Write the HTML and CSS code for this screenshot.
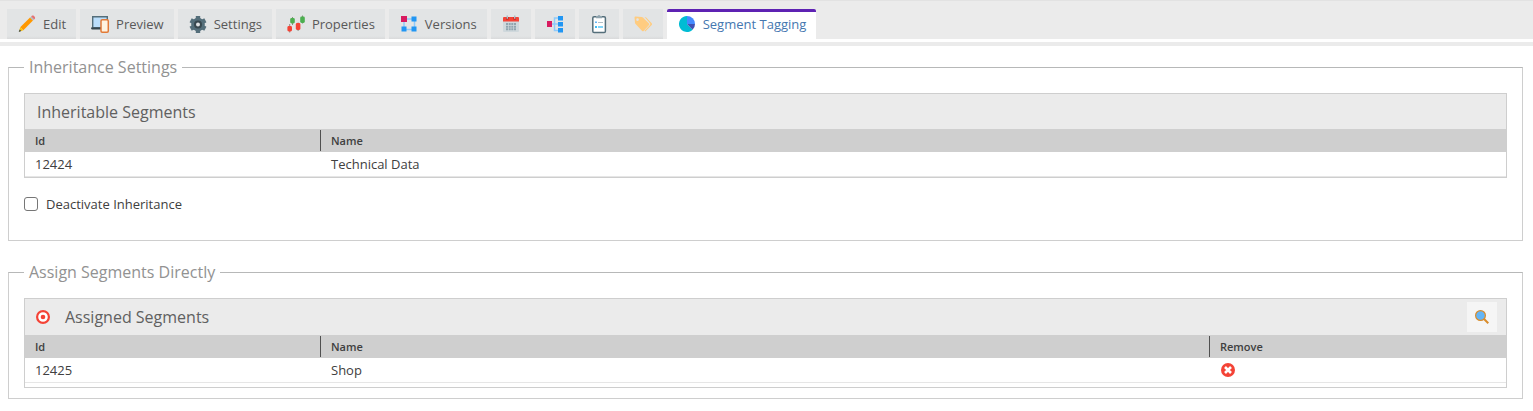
FILE: index.html
```html
<!DOCTYPE html>
<html lang="en">
<head>
    <meta charset="UTF-8">
    <meta name="viewport" content="width=device-width, initial-scale=1.0">
    <title>Segment Tagging</title>
    <link rel="stylesheet" href="styles.css">
</head>
<body>

    <nav class="tab-bar">
        <button type="button" class="tab">
            <svg class="icon" viewBox="0 0 20 20"><path fill="#ff9800" d="M3.2 13.2 13 3.6l3 3-9.700 9.600z"/><path fill="#b0bec5" d="m13 3.600 1.200-1.200 3 3L16 6.600z"/><path fill="#e57373" d="m14.200 2.400.6-.6c1.500-1.200 4.200 1.400 3 3l-.6.600z"/><path fill="#ffc107" d="m3.200 13.200 3.100 3L2 17.800z"/><path fill="#37474f" d="m2.600 15.600 1.700 1.500L1.700 18z"/></svg>
            Edit
        </button>
        <button type="button" class="tab">
            <svg class="icon" viewBox="0 0 20 20"><path fill="#bbdefb" stroke="#546e7a" stroke-width="1.400" d="M2.700 2.700h14.600v11H2.700z"/><path fill="#37474f" d="M1 13.600h11v1.900H2q-1 0-1-1.900z"/><rect x="11" y="5.700" width="7.300" height="12.600" rx="1.200" fill="#fff3e0" stroke="#e27a37" stroke-width="1.500"/></svg>
            Preview
        </button>
        <button type="button" class="tab">
            <svg class="icon" viewBox="0 0 20 20"><g fill="#546e7a"><circle cx="10" cy="10.500" r="6.800"/><path d="M7.800 2h4.400v17H7.800z"/><path d="M7.800 2h4.400v17H7.800z" transform="rotate(60 10 10.500)"/><path d="M7.800 2h4.400v17H7.800z" transform="rotate(120 10 10.500)"/></g><circle cx="10" cy="10.500" r="4" fill="#37474f"/><circle cx="10" cy="10.500" r="2" fill="#dfe2e4"/></svg>
            Settings
        </button>
        <button type="button" class="tab">
            <svg class="icon" viewBox="0 0 20 20"><g fill="#8d8b80"><path d="M3.200 10h1v8.600h-1zM6 3h1v8H6zM11.600 8.500h1V17h-1zM16 1.500h1v8h-1z"/></g><rect x="1.400" y="12" width="4.600" height="5.500" rx="1.400" fill="#f44336"/><rect x="4.200" y="4" width="4.600" height="5.500" rx="1.400" fill="#4caf50"/><rect x="9.800" y="9" width="4.600" height="7" rx="1.400" fill="#f44336"/><rect x="14.200" y="2.500" width="4.600" height="6.500" rx="1.400" fill="#4caf50"/></svg>
            Properties
        </button>
        <button type="button" class="tab">
            <svg class="icon" viewBox="0 0 20 20"><path fill="none" stroke="#90caf9" stroke-width="1.500" d="M5 5h10.500v10.500H5z"/><path fill="#d81b60" d="M2 2h6v6H2z"/><path fill="#2196f3" d="M12.500 2.500h5v5h-5zM2.500 12.500h5v5h-5zM12.500 12.500h5v5h-5z"/></svg>
            Versions
        </button>
        <button type="button" class="tab" aria-label="Schedule">
            <svg class="icon" viewBox="0 0 20 20"><path fill="#cfd8dc" d="M2 7h16v10q0 1-1 1H3q-1 0-1-1z"/><path fill="#f44336" d="M3 3h14q1 0 1 1v3.500H2V4q0-1 1-1z"/><path fill="#b71c1c" d="M5 3h2.500v2.500H5zM12.500 3H15v2.500h-2.500z"/><path fill="#b0bec5" d="M5.500 1.500h1.500v3.200H5.500zM13 1.500h1.500v3.200H13z"/><path fill="#90a4ae" d="M5 9h2v2H5zm2.700 0h2v2h-2zm2.600 0h2v2h-2zM13 9h2v2h-2zm-8 2.700h2v2H5zm2.700 0h2v2h-2zm2.600 0h2v2h-2zm2.700 0h2v2h-2zm-8 2.600h2v2H5zm2.700 0h2v2h-2zm2.600 0h2v2h-2zm2.700 0h2v2h-2z"/></svg>
        </button>
        <button type="button" class="tab" aria-label="Dependencies">
            <svg class="icon" viewBox="0 0 20 20"><path fill="none" stroke="#90caf9" stroke-width="1.500" d="M6 10h9M15 4H9.500v12.500H15"/><path fill="#d81b60" d="M2 7h5v6H2z"/><path fill="#2196f3" d="M13 2h5v4.500h-5zM13 8h5v4.500h-5zM13 14h5v4.500h-5z"/></svg>
        </button>
        <button type="button" class="tab" aria-label="Notes">
            <svg class="icon" viewBox="0 0 20 20"><rect x="3.800" y="2.800" width="12.600" height="15.800" rx="1.300" fill="#fff" stroke="#546e7a" stroke-width="1.500"/><path fill="#90a4ae" d="M7 4.200V2h1.500q1.500-2 3 0H13v2.200z"/><path fill="#b0bec5" d="M9 8h5v1H9z"/><path fill="#64b5f6" d="M6 7.500h2V9H6z"/><path fill="#03a9f4" d="M6 12.200h2v1.500H6zM9 12.400h5v1.200H9z"/></svg>
        </button>
        <button type="button" class="tab" aria-label="Tags">
            <svg class="icon" viewBox="0 0 20 20"><path fill="#ffcc80" d="m11.500 3 1.700.5 5.500 5.800q.8.900 0 1.700l-6.400 6.500-.8-.8 5.500-5.800q.7-.8 0-1.600z"/><path fill="#ffcc80" fill-rule="evenodd" d="M1.500 3.500q0-1 1-1l6.300.4q.7 0 1.200.6l6 6q.8.800 0 1.600l-5.300 5.800q-.8.800-1.600 0L2.600 10q-.5-.5-.6-1.200zm3 .8a1.300 1.300 0 1 0 .1 2.600 1.300 1.300 0 0 0-.1-2.600z"/></svg>
        </button>
        <button type="button" class="tab active">
            <svg class="icon" viewBox="0 0 20 20"><path fill="#00bcd4" d="M10 2a8 8 0 1 0 5.600 13.700L10 10z"/><path fill="#448aff" d="M10 2v8h8a8 8 0 0 0-8-8z"/><path fill="#3f51b5" d="M18 10h-8l5.600 5.700A8 8 0 0 0 18 10z"/></svg>
            Segment Tagging
        </button>
    </nav>

    <main class="content">
        <fieldset class="section inheritance">
            <legend>Inheritance Settings</legend>
            <div class="panel">
                <div class="panel-header">
                    <h2>Inheritable Segments</h2>
                </div>
                <table>
                    <thead>
                        <tr>
                            <th class="col-id"><span>Id</span></th>
                            <th><span>Name</span></th>
                        </tr>
                    </thead>
                    <tbody>
                        <tr>
                            <td>12424</td>
                            <td>Technical Data</td>
                        </tr>
                    </tbody>
                </table>
            </div>
            <div class="check-row">
                <input type="checkbox" id="deactivate">
                <label for="deactivate">Deactivate Inheritance</label>
            </div>
        </fieldset>

        <fieldset class="section">
            <legend>Assign Segments Directly</legend>
            <div class="panel assigned">
                <div class="panel-header">
                    <svg class="target" viewBox="0 0 16 16"><circle cx="8" cy="8" r="5.900" fill="#fff" stroke="#f44336" stroke-width="2.200"/><circle cx="8" cy="8" r="2.300" fill="#f44336"/></svg>
                    <h2>Assigned Segments</h2>
                    <button type="button" class="search-btn" aria-label="Search">
                        <svg viewBox="0 0 16 16"><path stroke="#d98c2b" stroke-width="2" d="m9.800 9.800 4.500 4.500"/><circle cx="6.500" cy="6.500" r="4.900" fill="#64b5f6" stroke="#d98c2b" stroke-width="1.200"/></svg>
                    </button>
                </div>
                <table>
                    <thead>
                        <tr>
                            <th class="col-id"><span>Id</span></th>
                            <th><span>Name</span></th>
                            <th class="col-remove"><span>Remove</span></th>
                        </tr>
                    </thead>
                    <tbody>
                        <tr>
                            <td>12425</td>
                            <td>Shop</td>
                            <td>
                                <button type="button" class="remove-btn" aria-label="Remove">
                                    <svg viewBox="0 0 16 16"><circle cx="8" cy="8" r="7" fill="#f44336"/><path stroke="#fff" stroke-width="2.600" d="m5 5 6 6M11 5l-6 6"/></svg>
                                </button>
                            </td>
                        </tr>
                    </tbody>
                </table>
            </div>
        </fieldset>
    </main>

</body>
</html>
```
FILE: styles.css
```css
* {
    box-sizing: border-box;
}
body {
    margin: 0;
    background: #fff;
    color: #404040;
    font-family: "Open Sans", sans-serif;
    font-size: 13px;
}
button {
    font: inherit;
    cursor: pointer;
}
.tab-bar {
    display: flex;
    gap: 4px;
    padding: 8px 7px 0;
    background: #ebebeb;
    border-top: 1px solid #e2e2e2;
}
.tab {
    display: flex;
    align-items: center;
    gap: 6px;
    height: 30px;
    padding: 0 10px;
    border: none;
    background: linear-gradient(#e2e4e5 90%, #d9dadb);
    color: #595959;
    white-space: nowrap;
}
.tab.active {
    background: #fff;
    border-top: 3px solid #5e22b3;
    border-radius: 2px 2px 0 0;
    padding-bottom: 3px;
    color: #4577b0;
}
.icon {
    width: 20px;
    height: 20px;
}
.content {
    margin-top: 3px;
    padding: 10px 10px 12px 8px;
    border-top: 4px solid #ebebeb;
}
.section {
    min-width: 0;
    margin: 0 0 20px;
    padding: 15px 15px 10px;
    border: 1px solid #cecece;
    border-top-color: #b7b8b8;
}
.section:last-child {
    margin-bottom: 0;
}
.inheritance {
    padding-bottom: 26px;
}
legend {
    padding: 0 5px;
    color: #929292;
    font-size: 16px;
    line-height: 22px;
}
.panel {
    border: 1px solid #cecece;
}
.assigned {
    padding-bottom: 4px;
}
.panel-header {
    display: flex;
    align-items: center;
    height: 35px;
    padding: 0 9px 0 12px;
    background: #ebebeb;
}
.assigned .panel-header {
    height: 36px;
    padding-left: 10px;
}
h2 {
    margin: 0;
    color: #606060;
    font-size: 16px;
    font-weight: 400;
    line-height: 22px;
}
.target {
    width: 16px;
    height: 16px;
    margin-right: 14px;
}
.search-btn {
    display: flex;
    align-items: center;
    justify-content: center;
    width: 30px;
    height: 30px;
    margin-left: auto;
    padding: 0;
    border: none;
    background: #f5f5f5;
}
.search-btn svg,
.remove-btn svg {
    display: block;
    width: 16px;
    height: 16px;
}
table {
    width: 100%;
    table-layout: fixed;
    border-collapse: separate;
    border-spacing: 0;
}
th {
    padding: 1px 0;
    background: #cfcfcf;
    font-size: 11px;
    font-weight: 600;
    text-align: left;
}
th span {
    display: block;
    padding-left: 10px;
    line-height: 21px;
}
th + th span {
    border-left: 1px solid #505050;
}
.col-id {
    width: 295px;
}
.col-remove {
    width: 297px;
}
td {
    height: 25px;
    padding: 0 0 0 10px;
    border-bottom: 1px solid #e6e6e6;
    line-height: 24px;
}
td + td {
    padding-left: 11px;
}
.remove-btn {
    display: block;
    padding: 0;
    border: none;
    background: none;
}
.check-row {
    display: flex;
    align-items: center;
    gap: 8px;
    margin-top: 16px;
}
.check-row input {
    appearance: none;
    width: 14px;
    height: 14px;
    margin: 0;
    border: 1px solid #767676;
    border-radius: 3px;
    background: #fff;
}
.check-row input:checked {
    background: #5e22b3;
}
.check-row label {
    line-height: 20px;
}
```
